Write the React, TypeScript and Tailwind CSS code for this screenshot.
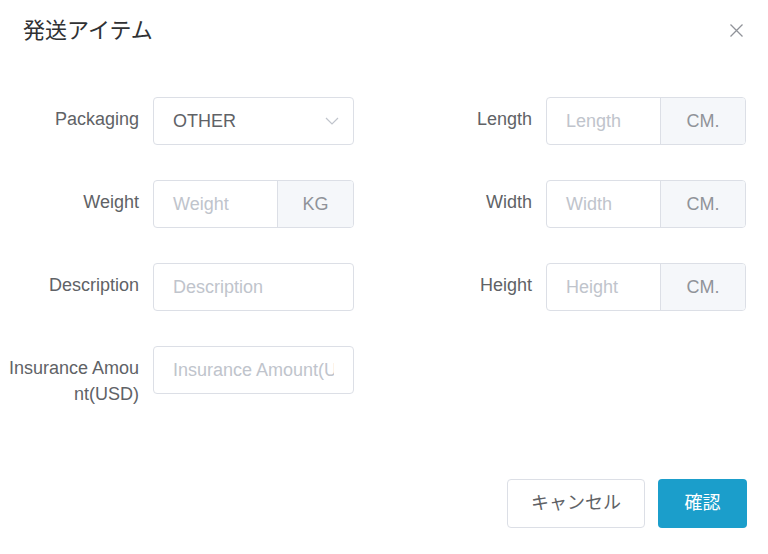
import React from "react";

const FONT = { fontFamily: '"Liberation Sans", "Noto Sans CJK JP", sans-serif' };

function Label({ children }: { children: React.ReactNode }) {
  return (
    <div className="w-[138px] shrink-0 pt-[9px] text-right text-[18px] leading-[26px] text-[#606266] break-all">
      {children}
    </div>
  );
}

function TextInput({ placeholder }: { placeholder: string }) {
  return (
    <div className="flex h-[48px] min-w-0 flex-1 items-center overflow-hidden rounded-[4px] border border-[#dcdfe6] bg-white px-[19px]">
      <span className="overflow-hidden whitespace-nowrap text-[18px] text-[#c0c4cc]">{placeholder}</span>
    </div>
  );
}

function AddonInput({ placeholder, unit, addonW }: { placeholder: string; unit: string; addonW: string }) {
  return (
    <div className="flex h-[48px] min-w-0 flex-1 overflow-hidden rounded-[4px] border border-[#dcdfe6] bg-white">
      <div className="flex min-w-0 flex-1 items-center px-[19px]">
        <span className="whitespace-nowrap text-[18px] text-[#c0c4cc]">{placeholder}</span>
      </div>
      <div className={`flex ${addonW} shrink-0 items-center justify-center border-l border-[#dcdfe6] bg-[#f5f7fa] text-[18px] text-[#909399]`}>
        {unit}
      </div>
    </div>
  );
}

function SelectInput() {
  return (
    <div className="flex h-[48px] min-w-0 flex-1 items-center justify-between rounded-[4px] border border-[#dcdfe6] bg-white pl-[19px] pr-[14px]">
      <span className="text-[18px] text-[#606266]">OTHER</span>
      <svg width="14" height="8" viewBox="0 0 14 8" fill="none">
        <path d="M1 1 L7 7 L13 1" stroke="#c0c4cc" strokeWidth="1.2" />
      </svg>
    </div>
  );
}

function Row({ label, children }: { label: React.ReactNode; children: React.ReactNode }) {
  return (
    <div className="flex items-start justify-end gap-[14px]">
      <Label>{label}</Label>
      <div className="flex min-w-0 flex-1">{children}</div>
    </div>
  );
}

export default function App() {
  return (
    <div className="h-[554px] w-[768px] bg-white" style={FONT}>
      <div className="flex h-[60px] items-center justify-between pl-[23px] pr-[25px]">
        <div className="text-[22px] text-[#303133]">発送アイテム</div>
        <svg width="13" height="13" viewBox="0 0 13 13">
          <path d="M0.5 0.5 L12.5 12.5 M12.5 0.5 L0.5 12.5" stroke="#909399" strokeWidth="1.3" />
        </svg>
      </div>
      <div className="mt-[37px] flex gap-[40px] pr-[22px]">
        <div className="flex w-[354px] flex-col gap-[35px] pl-[1px]">
          <Row label="Packaging">
            <SelectInput />
          </Row>
          <Row label="Weight">
            <AddonInput placeholder="Weight" unit="KG" addonW="w-[76px]" />
          </Row>
          <Row label="Description">
            <TextInput placeholder="Description" />
          </Row>
          <Row label="Insurance Amount(USD)">
            <TextInput placeholder="Insurance Amount(USD)" />
          </Row>
        </div>
        <div className="flex w-[352px] flex-col gap-[35px]">
          <Row label="Length">
            <AddonInput placeholder="Length" unit="CM." addonW="w-[85px]" />
          </Row>
          <Row label="Width">
            <AddonInput placeholder="Width" unit="CM." addonW="w-[85px]" />
          </Row>
          <Row label="Height">
            <AddonInput placeholder="Height" unit="CM." addonW="w-[85px]" />
          </Row>
        </div>
      </div>
      <div className="mt-[72px] flex justify-end gap-[13px] pr-[21px]">
        <button className="flex h-[49px] w-[138px] items-center justify-center rounded-[4px] border border-[#dcdfe6] bg-white text-[18px] text-[#606266]">
          キャンセル
        </button>
        <button className="flex h-[49px] w-[89px] items-center justify-center rounded-[4px] bg-[#1b9ecb] text-[18px] text-white">
          確認
        </button>
      </div>
    </div>
  );
}
